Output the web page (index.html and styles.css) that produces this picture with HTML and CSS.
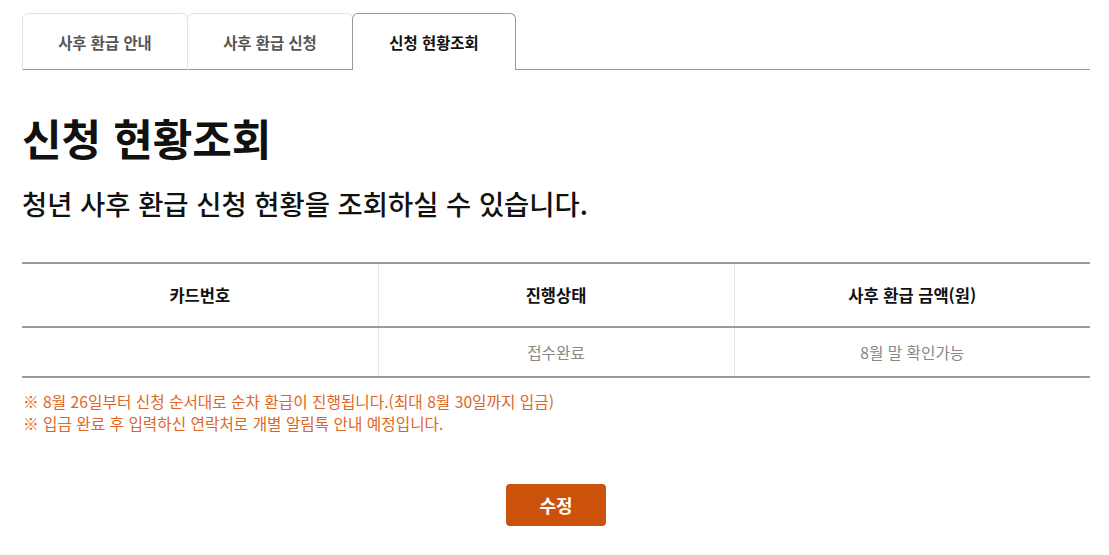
FILE: index.html
```html
<!DOCTYPE html>
<html lang="ko">
<head>
<meta charset="utf-8">
<link rel="stylesheet" href="styles.css">
</head>
<body>
<div class="page">
  <ul class="tabs">
    <li class="tab">사후 환급 안내</li>
    <li class="tab">사후 환급 신청</li>
    <li class="tab active">신청 현황조회</li>
    <li class="tab-fill"></li>
  </ul>
  <h1 class="title">신청 현황조회</h1>
  <p class="subtitle">청년 사후 환급 신청 현황을 조회하실 수 있습니다.</p>
  <table class="status">
    <thead>
      <tr><th>카드번호</th><th>진행상태</th><th>사후 환급 금액(원)</th></tr>
    </thead>
    <tbody>
      <tr><td></td><td>접수완료</td><td>8월 말 확인가능</td></tr>
    </tbody>
  </table>
  <div class="notes">
    <p>※ 8월 26일부터 신청 순서대로 순차 환급이 진행됩니다.(최대 8월 30일까지 입금)</p>
    <p>※ 입금 완료 후 입력하신 연락처로 개별 알림톡 안내 예정입니다.</p>
  </div>
  <div class="actions">
    <button class="btn">수정</button>
  </div>
</div>
</body>
</html>
```

FILE: styles.css
```css
* { box-sizing: border-box; }
html, body { margin: 0; padding: 0; background: #fff; }
body {
  font-family: "Noto Sans CJK KR", "Noto Sans", sans-serif;
  color: #111;
}
.page {
  width: 1068px;
  margin-left: 22px;
  padding-top: 13px;
}
.tabs {
  list-style: none;
  margin: 0;
  padding: 0;
  display: flex;
  height: 57px;
}
.tab {
  width: 166px;
  height: 57px;
  border: 1px solid #e2e2e2;
  border-bottom: 1px solid #999;
  border-radius: 6px 6px 0 0;
  display: flex;
  align-items: center;
  justify-content: center;
  font-size: 15.4px;
  font-weight: 700;
  color: #555;
}
.tab + .tab { margin-left: -1px; }
.tab.active {
  width: 164px;
  border: 1px solid #999;
  border-bottom: none;
  color: #111;
}
.tab-fill {
  flex: 1;
  border-bottom: 1px solid #999;
}
.title {
  margin: 41px 0 0;
  font-size: 43px;
  line-height: 52px;
  font-weight: 700;
}
.subtitle {
  margin: 21px 0 0;
  font-size: 27.4px;
  line-height: 38px;
  font-weight: 500;
}
.status {
  width: 100%;
  margin-top: 40px;
  border-collapse: collapse;
  table-layout: fixed;
  border-top: 2px solid #999;
  border-bottom: 2px solid #999;
}
.status th, .status td {
  width: 33.333%;
  text-align: center;
  border-left: 1px solid #e6e6e6;
}
.status th:first-child, .status td:first-child { border-left: none; }
.status th {
  height: 64px;
  font-size: 16.5px;
  font-weight: 700;
  color: #111;
  border-bottom: 2px solid #999;
}
.status td {
  height: 50px;
  font-size: 15.7px;
  color: #888;
}
.notes {
  margin-top: 13px;
  color: #e0661f;
  font-size: 15.7px;
  line-height: 22px;
}
.notes p { margin: 0; padding-left: 1px; }
.actions {
  display: flex;
  justify-content: center;
  margin-top: 49px;
}
.btn {
  width: 100px;
  height: 42px;
  border: none;
  border-radius: 4px;
  background: #cc520b;
  color: #fff;
  font-family: inherit;
  font-size: 18px;
  font-weight: 700;
}
```
